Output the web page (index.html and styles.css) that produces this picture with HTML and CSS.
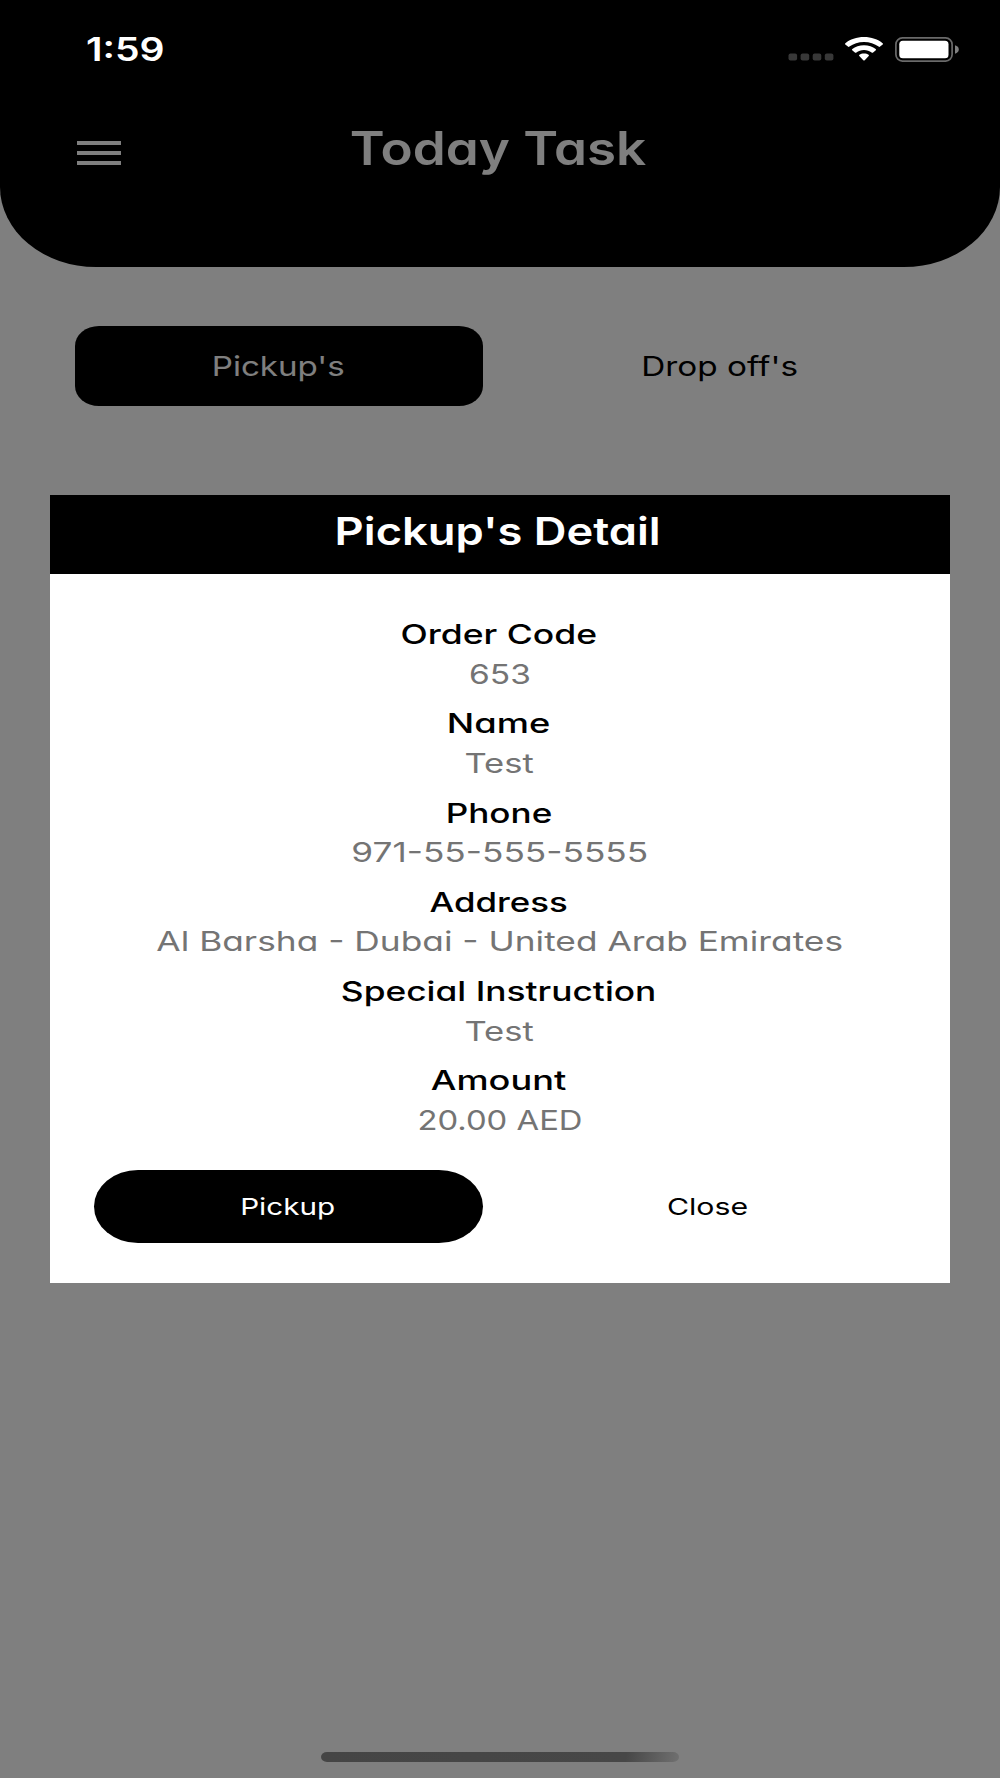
FILE: index.html
```html
<!DOCTYPE html>
<html lang="en">
<head>
<meta charset="utf-8">
<title>Today Task</title>
<link rel="stylesheet" href="styles.css">
</head>
<body>
<div class="screen">
  <header class="header">
    <div class="status">
      <span class="stretch time">1:59</span>
      <div class="status-icons">
        <svg class="signal" width="46" height="8" viewBox="0 0 46 8" fill="#383838">
          <rect x="0.5" y="0.5" width="8.6" height="7" rx="2"/><rect x="12.6" y="0.5" width="8.6" height="7" rx="2"/><rect x="24.7" y="0.5" width="8.6" height="7" rx="2"/><rect x="36.8" y="0.5" width="8.6" height="7" rx="2"/>
        </svg>
        <svg class="wifi" width="38" height="24" viewBox="0 0 38 24" fill="#fff">
          <path d="M19 0C11.6 0 5 2.3.4 6.2c-.5.4-.5.9-.1 1.3l2.6 2.1c.4.4 1 .4 1.5 0C8.3 6.5 13.4 4.9 19 4.9s10.7 1.6 14.6 4.7c.5.4 1.1.4 1.5 0l2.6-2.1c.4-.4.4-.9-.1-1.3C33 2.3 26.400 0 19 0Z"/>
          <path d="M19 8.300c-4.600 0-8.700 1.400-11.700 3.700-.5.4-.5.900-.1 1.300l2.700 2.200c.4.4 1 .4 1.500 0 2-1.500 4.700-2.400 7.600-2.400s5.600.9 7.600 2.400c.5.4 1.100.4 1.500 0l2.700-2.200c.4-.4.4-.9-.1-1.300-3-2.300-7.100-3.700-11.700-3.700Z"/>
          <path d="M19 16.500c-1.800 0-3.400.5-4.600 1.300-.5.4-.5.8-.1 1.200l4 4.200c.4.4 1 .4 1.400 0l4-4.200c.4-.4.4-.8-.1-1.200-1.200-.8-2.800-1.300-4.600-1.300Z"/>
        </svg>
        <svg class="battery" width="64" height="25" viewBox="0 0 64 25">
          <rect x="0.9" y="0.9" width="56.2" height="23.2" rx="6.5" fill="none" stroke="#6a6a6a" stroke-width="1.7"/>
          <rect x="4.3" y="3.8" width="49.2" height="17.4" rx="3.5" fill="#fff"/>
          <path d="M60 8.300c2.400.6 3.800 2.200 3.800 4.200s-1.400 3.600-3.800 4.200Z" fill="#808080"/>
        </svg>
      </div>
    </div>
    <div class="navbar">
      <svg class="menu" width="44" height="24" viewBox="0 0 44 24" fill="#fff">
        <rect width="44" height="4"/><rect y="10" width="44" height="4"/><rect y="20" width="44" height="4"/>
      </svg>
      <h1><span class="stretch page-title">Today Task</span></h1>
    </div>
  </header>
  <nav class="tabs">
    <div class="tab tab-active"><span class="stretch tab-pickups">Pickup's</span></div>
    <div class="tab"><span class="stretch tab-drops">Drop off's</span></div>
  </nav>
  <div class="overlay">
    <section class="modal">
      <h2><span class="stretch modal-title">Pickup's Detail</span></h2>
      <dl class="details">
        <dt><span class="stretch label-code">Order Code</span></dt>
        <dd><span class="stretch value-code">653</span></dd>
        <dt><span class="stretch label-name">Name</span></dt>
        <dd><span class="stretch value-test">Test</span></dd>
        <dt><span class="stretch label-phone">Phone</span></dt>
        <dd><span class="stretch value-phone">971-55-555-5555</span></dd>
        <dt><span class="stretch label-address">Address</span></dt>
        <dd><span class="stretch value-address">Al Barsha - Dubai - United Arab Emirates</span></dd>
        <dt><span class="stretch label-special">Special Instruction</span></dt>
        <dd><span class="stretch value-test">Test</span></dd>
        <dt><span class="stretch label-amount">Amount</span></dt>
        <dd><span class="stretch value-amount">20.00 AED</span></dd>
      </dl>
      <div class="actions">
        <div class="button button-primary"><span class="stretch action-pickup">Pickup</span></div>
        <div class="button"><span class="stretch action-close">Close</span></div>
      </div>
    </section>
  </div>
  <div class="home-indicator"></div>
</div>
</body>
</html>
```
FILE: styles.css
```css
* { box-sizing: border-box; }
body {
  margin: 0;
  font-family: Inter, "Liberation Sans", sans-serif;
  font-feature-settings: "cv11";
  background: #fff;
  color: #000;
}
h1, h2, dl, dt, dd { margin: 0; }
.screen {
  position: relative;
  width: 1000px;
  height: 1778px;
  overflow: hidden;
}

/* wide lettering: each text is widened around its own centre */
.stretch {
  display: inline-block;
  white-space: nowrap;
  transform: scaleX(var(--wide, 1.25));
}

.header {
  height: 267px;
  background: #000;
  border-radius: 0 0 96px 96px / 0 0 80px 80px;
}
.status {
  position: relative;
  z-index: 2;
  display: flex;
  justify-content: space-between;
  height: 98px;
  padding: 30px 41px 0 93px;
  color: #fff;
}
.time { --wide: 1.22; font-size: 32px; font-weight: 600; line-height: 40px; }
.status-icons { display: flex; align-items: flex-start; padding-top: 7px; }
.signal { margin: 16px 11px 0 0; }
.wifi { margin-right: 12px; }
.navbar {
  display: grid;
  grid-template-columns: 44px 1fr 44px;
  align-items: start;
  padding: 20px 82px 0 77px;
}
.menu { margin-top: 23px; }
h1 { color: #fff; font-size: 46px; font-weight: 600; line-height: 60px; text-align: center; }
.page-title { --wide: 1.15; }

.tabs {
  display: grid;
  grid-template-columns: 408px 408px;
  gap: 33px;
  padding: 59px 0 0 75px;
}
.tab {
  height: 80px;
  border-radius: 24px / 20px;
  font-size: 27.5px;
  line-height: 80px;
  text-align: center;
}
.tab-active { padding-right: 2px; background: #000; color: #fff; }
.tab-pickups { --wide: 1.204; }
.tab-drops { --wide: 1.212; }

.overlay {
  position: absolute;
  inset: 0;
  z-index: 1;
  display: flex;
  align-items: center;
  justify-content: center;
  background: rgba(0, 0, 0, .5);
}
.modal { width: 900px; height: 788px; background: #fff; }
h2 {
  height: 79px;
  padding-right: 4px;
  background: #000;
  color: #fff;
  font-size: 38.5px;
  font-weight: 600;
  line-height: 73px;
  text-align: center;
}
.modal-title { --wide: 1.176; }
.details { padding-top: 41px; font-size: 27px; line-height: 39.6px; text-align: center; }
dt { padding-right: 3px; font-weight: 500; }
dd { margin-bottom: 10.1px; padding-right: 1px; color: #747474; font-weight: 400; }
.label-code { --wide: 1.315; }
.label-name { --wide: 1.345; }
.label-phone { --wide: 1.3; }
.label-address { --wide: 1.29; }
.label-special { --wide: 1.308; }
.label-amount { --wide: 1.34; }
.value-code { --wide: 1.24; }
.value-test { --wide: 1.28; }
.value-phone { --wide: 1.305; }
.value-address { --wide: 1.307; }
.value-amount { --wide: 1.215; }

.actions {
  display: grid;
  grid-template-columns: 389px 389px;
  gap: 31px;
  padding: 19px 0 0 44px;
}
.button {
  height: 73px;
  padding-right: 2px;
  border-radius: 44px / 36.5px;
  font-size: 23.5px;
  line-height: 74px;
  text-align: center;
}
.button-primary { background: #000; color: #fff; }
.action-pickup { --wide: 1.262; }
.action-close { --wide: 1.287; }

.home-indicator {
  position: absolute;
  z-index: 2;
  left: 321px;
  bottom: 16px;
  width: 358px;
  height: 10px;
  border-radius: 6px / 5px;
  background: linear-gradient(100deg, #454545 0%, #474747 85%, #707070 100%);
}
```
